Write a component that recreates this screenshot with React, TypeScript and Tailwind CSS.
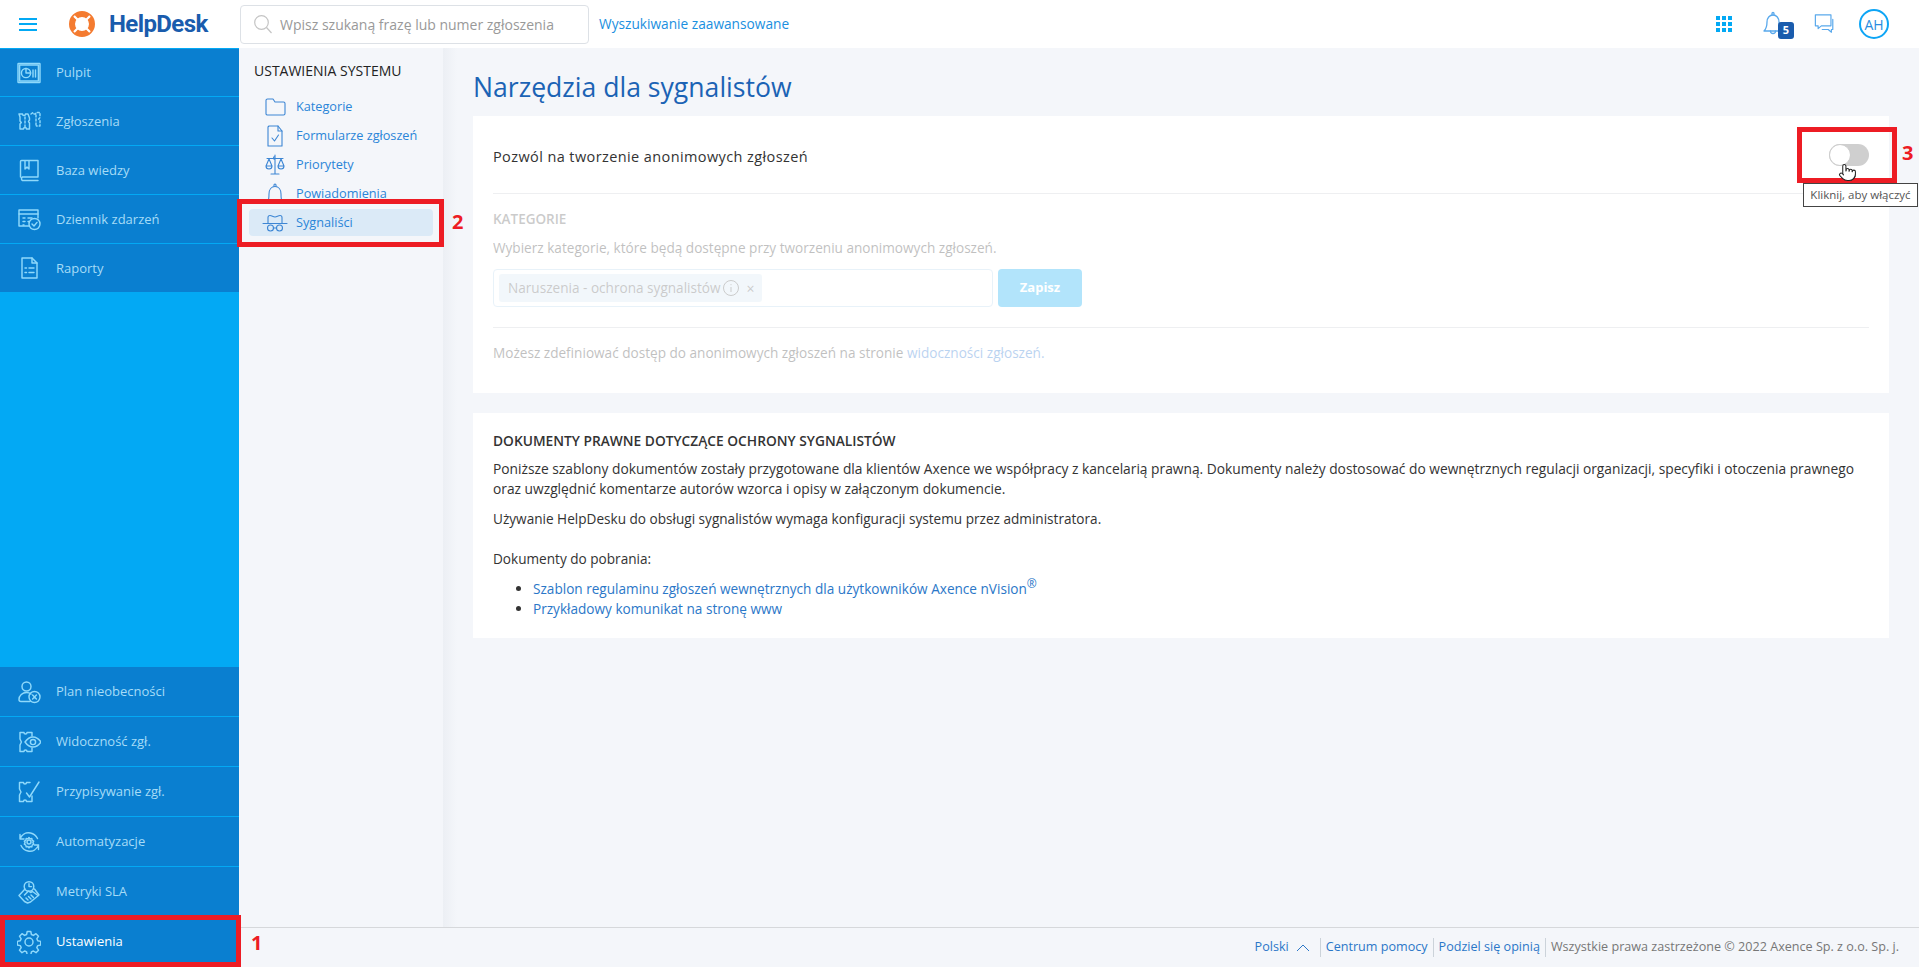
import React from "react";
import { Pointer } from "lucide-react";

const S = ({ children, w = 24, h = 24, vb = "0 0 24 24", sw = 1.45 }: { children: React.ReactNode; w?: number; h?: number; vb?: string; sw?: number }) => (
  <svg width={w} height={h} viewBox={vb} fill="none" stroke="currentColor" strokeWidth={sw} strokeLinecap="round" strokeLinejoin="round" className="shrink-0">
    {children}
  </svg>
);

const icons: Record<string, React.ReactNode> = {
  pulpit: (<S><rect x="1" y="2.5" width="22" height="19" rx="0.5" /><rect x="2.6" y="4" width="18.8" height="16" /><circle cx="9" cy="12" r="4.6" /><path d="M9 7.4V12H13.6" /><path d="M16 9v7M18.5 9v7" /></S>),
  ticket: (<S><path d="M2 5h3.5a1.5 1.5 0 0 0 3 0H11l1.5 4v2l-1 1.5 1 1.5V20H9.5a1.5 1.5 0 0 0-3 0H3v-5l1.3-1.5L3 12V8z" /><path d="M14 5l2-1.5a1.5 1.5 0 0 0 3 0H23v5l-1.3 1.5L23 11.5V17h-3.5M8 8v10M19 6v10" strokeDasharray="2 2" /></S>),
  book: (<S><path d="M3.5 19V3.5a1 1 0 0 1 1-1H21v16.5H5.5a2 2 0 0 0 0 3.5H21" /><path d="M8 3v8l2-2 2 2V3" /></S>),
  log: (<S><path d="M12 19H2V3h19v8" /><path d="M2 7h19M6 11h2M6 14.5h2M6 18h1M11 11h4M11 14.5h1" /><circle cx="17.5" cy="17" r="5.5" /><path d="M15 17l2 2 3-3.6" /></S>),
  report: (<S><path d="M5 2h10l5 5v15H5z" /><path d="M15 2v5h5M8 12h1.5M12 12h5M8 16.5h1.5M12 16.5h5" /></S>),
  absence: (<S><circle cx="9.5" cy="6.5" r="4.5" /><path d="M14 14c-1.2-1-2.8-1.5-4.5-1.5C5.5 12.5 2 15.5 2 19.5c0 1.2 1 2 2 2h9" /><circle cx="17.5" cy="17" r="5.5" /><path d="M15.6 15.1l3.8 3.8M19.4 15.1l-3.8 3.8" /></S>),
  visibility: (<S><path d="M3 6V2.5h4a1.5 1.5 0 0 0 3 0h5V6M3 18v3.5h4a1.5 1.5 0 0 1 3 0h5V18M3 6v3l1.4 3L3 15v3" /><path d="M8 12s3.5-5 8-5 8 5 8 5-3.500 5-8 5-8-5-8-5z" /><circle cx="16" cy="12" r="2.6" /></S>),
  assign: (<S><path d="M13 2.500H9.500a1.500 1.500 0 0 1-3 0H2.500V9l1.500 3-1.500 3v6.500h4a1.500 1.500 0 0 1 3 0H15V16" /><path d="M9.500 13l3 4L22 2" /></S>),
  auto: (<S><path d="M3 9c1.800-4.500 6-7 10.500-6 3 .6 5.500 2.500 7 5.500M3 9V4.500M3 9h4M21.500 15c-1.800 4.500-6 7-10.500 6-3-.6-5.500-2.500-7-5.500M21.500 15v4.500M21.500 15h-4" /><circle cx="12" cy="12" r="2" /><path d="M12 7.500l1 1.400 1.800-.4.4 1.800 1.500.9-.8 1.500.8 1.500-1.500.9-.4 1.800-1.800-.4-1 1.400-1-1.400-1.800.4-.4-1.800-1.500-.9.800-1.500-.8-1.500 1.500-.9.400-1.800 1.800.4z" /></S>),
  sla: (<S><circle cx="12" cy="6.500" r="4.800" /><path d="M12 3.800v2.800h2.500M8 9L2 15.500l5.500 6 3 1.500 3-1 8.500-7-4.500-6" /><path d="M7.500 15l4-4 2 1.500 2-1 5.500 4M9 18l2 2M11.500 16.500l2.500 2.500M14 15l2.500 2.500" /></S>),
  gear: (<S><circle cx="12" cy="12" r="4" /><path d="M10.200 1.500h3.600l.6 3 2 .9 2.600-1.700 2.500 2.500-1.700 2.600.9 2 3 .6v3.600l-3 .6-.9 2 1.700 2.600-2.500 2.500-2.600-1.700-2 .9-.6 3h-3.600l-.6-3-2-.9-2.600 1.700-2.500-2.500 1.700-2.600-.9-2-3-.6v-3.600l3-.6.9-2-1.700-2.600 2.500-2.500 2.600 1.700 2-.9z" /></S>),
  folder: (<S sw={1.1}><path d="M3 19V5.500A1.500 1.500 0 0 1 4.500 4h5.500l2 3h8.500A1.500 1.500 0 0 1 22 8.500V18.500a1.500 1.500 0 0 1-1.500 1.500h-16A1.500 1.500 0 0 1 3 19z" /></S>),
  form: (<S sw={1.1}><path d="M6 2h9l4 5v15H5V3z" /><path d="M15 2v5h4M9 14l2.500 3 4-6" /></S>),
  scale: (<S sw={1.1}><path d="M12 2v19M8 21h8M4 5.500h16M12 3.500a1 1 0 1 0 0 3" /><path d="M6 6l-3 7a3 3 0 0 0 6 0zM18 6l-3 7a3 3 0 0 0 6 0zM3 13h6M15 13h6" /></S>),
  bell: (<S sw={1.1}><path d="M4.500 20c1.200-1.500 1.500-3 1.500-8 0-4.500 2.500-7.500 6-7.500s6 3 6 7.500c0 5 .3 6.500 1.500 8z" /><path d="M11 4.500V3a1 1 0 0 1 2 0v1.500" /></S>),
  spy: (<S w={26} h={24} vb="0 0 26 24" sw={1.1}><path d="M1 12.500h24M6 12.500V6.500a2 2 0 0 1 2-2c2 0 3 1.500 5 1.500s3-1.500 5-1.500a2 2 0 0 1 2 2v6" /><circle cx="8.500" cy="17" r="3" /><circle cx="17.500" cy="17" r="3" /><path d="M11.500 17h3" /></S>),
};

const top = [
  ["pulpit", "Pulpit"], ["ticket", "Zgłoszenia"], ["book", "Baza wiedzy"], ["log", "Dziennik zdarzeń"], ["report", "Raporty"],
];
const bottom = [
  ["absence", "Plan nieobecności"], ["visibility", "Widoczność zgł."], ["assign", "Przypisywanie zgł."], ["auto", "Automatyzacje"], ["sla", "Metryki SLA"],
];
const sub = [
  ["folder", "Kategorie"], ["form", "Formularze zgłoszeń"], ["scale", "Priorytety"], ["bell", "Powiadomienia"], ["spy", "Sygnaliści"],
];

function Side({ icon, label, active, cls, textCls = "" }: { icon: string; label: string; active?: boolean; cls: string; textCls?: string }) {
  return (
    <div className={`flex items-center gap-[15px] bg-[#0a7fd0] border-[#03a9f4] pl-[17px] text-[13px] ${cls} ${active ? "text-white" : "text-[#a6dcf7]"}`}>
      <span className="text-[#8fd9fb]">{icons[icon]}</span>
      <span className={textCls}>{label}</span>
    </div>
  );
}

export default function App() {
  return (
    <div className="relative flex h-screen w-full flex-col overflow-hidden bg-[#f4f6fa] font-['Open_Sans',sans-serif] text-[13.6px] text-[#333]">
      <header className="flex h-12 shrink-0 items-center bg-white">
        <div className="ml-[19px] flex w-[18px] flex-col gap-[3.5px]">
          <span className="h-[2px] bg-[#03a9f4]" /><span className="h-[2px] bg-[#03a9f4]" /><span className="h-[2px] bg-[#03a9f4]" />
        </div>
        <svg width="28" height="28" viewBox="0 0 28 28" className="ml-[31px] shrink-0">
          <circle cx="14" cy="14" r="10" fill="none" stroke="#f47b30" strokeWidth="6" />
          <path d="M6 6l5 5M22 6l-5 5M6 22l5-5M22 22l-5-5" stroke="#fff" strokeWidth="2.200" />
        </svg>
        <span className="ml-[13px] w-[110px] font-['Roboto',sans-serif] text-[24px] font-bold tracking-[-0.6px] text-[#1a5cad]">HelpDesk</span>
        <div className="ml-[21px] flex h-[39px] w-[349px] items-center rounded-[4px] border border-[#dde1e6] pl-[12px] text-[14px] text-[#999]">
          <svg width="20" height="20" viewBox="0 0 20 20" fill="none" stroke="#c4c4c4" strokeWidth="1.200" className="shrink-0">
            <circle cx="8.500" cy="8.500" r="6.800" /><path d="M13.500 13.500l5 5.500" />
          </svg>
          <span className="ml-[7px]">Wpisz szukaną frazę lub numer zgłoszenia</span>
        </div>
        <span className="ml-[10px] text-[13.7px] text-[#1a8fe0]">Wyszukiwanie zaawansowane</span>
        <div className="ml-auto flex items-center pr-[30px]">
          <div className="grid grid-cols-3 gap-[2px]">
            {Array.from({ length: 9 }).map((_, i) => <span key={i} className="h-[4px] w-[4px] bg-[#03a9f4]" />)}
          </div>
          <div className="relative ml-[29px] h-[30px] w-[24px] text-[#5aa9ec]">
            <S w={24} h={30} vb="0 0 24 30" sw={1.300}>
              <path d="M3 22c2-2 3-4 3-9 0-4 2.500-7 6-7s6 3 6 7c0 5 1 7 3 9z" />
              <path d="M11 6V4.500a1 1 0 0 1 2 0V6M9.500 22a2.500 2.500 0 0 0 5 0" />
            </S>
            <span className="absolute left-[17px] top-[13px] flex h-[17px] w-[16px] items-center justify-center rounded-[3px] bg-[#1a5cad] text-[11px] font-bold text-white">5</span>
          </div>
          <div className="ml-[29px] text-[#5aa9ec]">
            <S w={22} h={22} sw={1.300}>
              <path d="M1.500 2h17v12H8l-3.500 3v-3h-3z" />
              <path d="M20.500 7v11h-1.500v3l-3.500-3H9" />
            </S>
          </div>
          <div className="ml-[23px] flex h-[30px] w-[30px] items-center justify-center rounded-full border-2 border-[#0ea5f5] text-[14px] text-[#2a8de0]">AH</div>
        </div>
      </header>

      <div className="flex min-h-0 flex-1">
        <aside className="flex w-[239px] shrink-0 flex-col justify-between bg-[#03a9f4]">
          <div>
            {top.map(([i, l], n) => (
              <Side key={l} icon={i} label={l} textCls={n === 0 ? "" : "pt-[2px]"} cls={n === 4 ? "h-[48px]" : n === 0 ? "h-[49px] border-y" : "h-[49px] border-b"} />
            ))}
          </div>
          <div>
            {bottom.map(([i, l]) => <Side key={l} icon={i} label={l} cls="h-[50px] border-b" />)}
            <Side icon="gear" label="Ustawienia" active cls="h-[50px]" textCls="font-medium" />
          </div>
        </aside>

        <div className="flex min-w-0 flex-1 flex-col">
          <div className="flex min-h-0 flex-1">
            <nav className="w-[204px] shrink-0 pt-[13px]">
              <div className="mb-3 ml-[15px] text-[14px] font-medium leading-5 text-[#222]">USTAWIENIA SYSTEMU</div>
              {sub.map(([i, l], n) => (
                <div key={l} className={`ml-[10px] mb-[2px] flex h-[27px] w-[184px] items-center rounded-[4px] pl-[14px] text-[12.7px] text-[#2a85d8] ${n === 4 ? "bg-[#dbeaf7]" : ""}`}>
                  <span className={`text-[#3d86d4] ${n === 4 ? "-ml-[1px]" : ""}`}>{icons[i]}</span>
                  <span className={n === 4 ? "ml-[8px]" : "ml-[9px]"}>{l}</span>
                </div>
              ))}
            </nav>
            <main className="min-w-0 flex-1 bg-[linear-gradient(to_right,#eceff4,#f4f6fa_14px)] px-[30px]">
              <h1 className="flex h-[68px] items-center pt-3 text-[26.6px] font-normal text-[#1b63b5]">Narzędzia dla sygnalistów</h1>
              <section className="bg-white px-5">
                <div className="flex h-[78px] items-center border-b border-[#eeeff1]">
                  <span className="pt-[5px] text-[14.5px] tracking-[0.4px]">Pozwól na tworzenie anonimowych zgłoszeń</span>
                  <div className="ml-auto flex h-[22px] w-[40px] rounded-full bg-[#cfcfcf]">
                    <span className="h-[22px] w-[22px] rounded-full border border-[#ccc] bg-white" />
                  </div>
                </div>
                <div className="opacity-30">
                  <div className="pt-[15px] text-[13.5px] font-semibold leading-5 text-[#555]">KATEGORIE</div>
                  <div className="mt-[9px] leading-5">Wybierz kategorie, które będą dostępne przy tworzeniu anonimowych zgłoszeń.</div>
                  <div className="mt-[11px] flex gap-[5px]">
                    <div className="flex h-[38px] w-[500px] items-center rounded-[4px] border border-[#b6d6ee] pl-[5px]">
                      <div className="flex h-[28px] items-center rounded-[3px] bg-[#d6e8f5] pl-[9px] pr-[7px] text-[#555]">
                        <span>Naruszenia - ochrona sygnalistów</span>
                        <svg width="16" height="16" viewBox="0 0 16 16" fill="none" stroke="#555" strokeWidth="1" className="ml-[2px]">
                          <circle cx="8" cy="8" r="7.500" /><path d="M8 7v5M8 4.200v1" />
                        </svg>
                        <span className="ml-[8px] text-[14px]">×</span>
                      </div>
                    </div>
                    <div className="flex h-[38px] w-[84px] items-center justify-center rounded-[4px] bg-[#03a9f4] text-[13px] font-bold text-white">Zapisz</div>
                  </div>
                </div>
                <div className="mt-[20px] h-px bg-[#eeeff1]" />
                <div className="pb-[30px] pt-[15px] leading-5 opacity-30">
                  Możesz zdefiniować dostęp do anonimowych zgłoszeń na stronie <span className="text-[#1a6fd0]">widoczności zgłoszeń.</span>
                </div>
              </section>
              <section className="mt-5 bg-white px-5 pb-[19px] pt-[18px] leading-5">
                <h2 className="text-[13.75px] font-semibold text-[#333]">DOKUMENTY PRAWNE DOTYCZĄCE OCHRONY SYGNALISTÓW</h2>
                <p className="mt-[8px] text-[13.78px]">Poniższe szablony dokumentów zostały przygotowane dla klientów Axence we współpracy z kancelarią prawną. Dokumenty należy dostosować do wewnętrznych regulacji organizacji, specyfiki i otoczenia prawnego oraz uwzględnić komentarze autorów wzorca i opisy w załączonym dokumencie.</p>
                <p className="mt-[10px]">Używanie HelpDesku do obsługi sygnalistów wymaga konfiguracji systemu przez administratora.</p>
                <p className="mt-5">Dokumenty do pobrania:</p>
                <ul className="mt-[10px] list-disc pl-10">
                  <li><span className="text-[#2b77c8]">Szablon regulaminu zgłoszeń wewnętrznych dla użytkowników Axence nVision<sup className="text-[12px] leading-none">®</sup></span></li>
                  <li><span className="text-[#2b77c8]">Przykładowy komunikat na stronę www</span></li>
                </ul>
              </section>
            </main>
          </div>
          <footer className="flex h-10 shrink-0 items-center justify-end border-t border-[#d6d8db] pr-[20px] text-[12.6px] text-[#2b77c8]">
            <span>Polski</span>
            <svg width="14" height="8" viewBox="0 0 14 8" fill="none" stroke="#2b77c8" strokeWidth="1" className="ml-[7px] mr-[10px]"><path d="M1 7l6-6 6 6" /></svg>
            <span className="border-l border-[#ccd3da] pl-[5px] pr-[5px]">Centrum pomocy</span>
            <span className="border-l border-[#ccd3da] pl-[5px] pr-[5px]">Podziel się opinią</span>
            <span className="border-l border-[#ccd3da] pl-[5px] text-[#777]">Wszystkie prawa zastrzeżone © 2022 Axence Sp. z o.o. Sp. j.</span>
          </footer>
        </div>
      </div>

      {/* annotations over the screenshot */}
      <div className="pointer-events-none absolute left-0 top-[915px] h-[52px] w-[241px] border-[5px] border-[#ed1c24]" />
      <span className="absolute left-[251px] top-[931px] text-[20px] font-bold leading-6 text-[#ed1c24]">1</span>
      <div className="pointer-events-none absolute left-[237px] top-[199px] h-[48px] w-[207px] border-[5px] border-[#ed1c24]" />
      <span className="absolute left-[452px] top-[210px] text-[20px] font-bold leading-6 text-[#ed1c24]">2</span>
      <div className="pointer-events-none absolute left-[1797px] top-[127px] h-[56px] w-[100px] border-[5px] border-[#ed1c24]" />
      <span className="absolute left-[1902px] top-[141px] text-[20px] font-bold leading-6 text-[#ed1c24]">3</span>
      <div className="absolute left-[1803px] top-[183px] flex h-[24px] w-[115px] items-center justify-center border border-[#444] bg-white text-[11.5px] text-[#555]">Kliknij, aby włączyć</div>
      <Pointer size={19} className="absolute left-[1838px] top-[163px] fill-white stroke-[#222]" strokeWidth={1.300} />
    </div>
  );
}
